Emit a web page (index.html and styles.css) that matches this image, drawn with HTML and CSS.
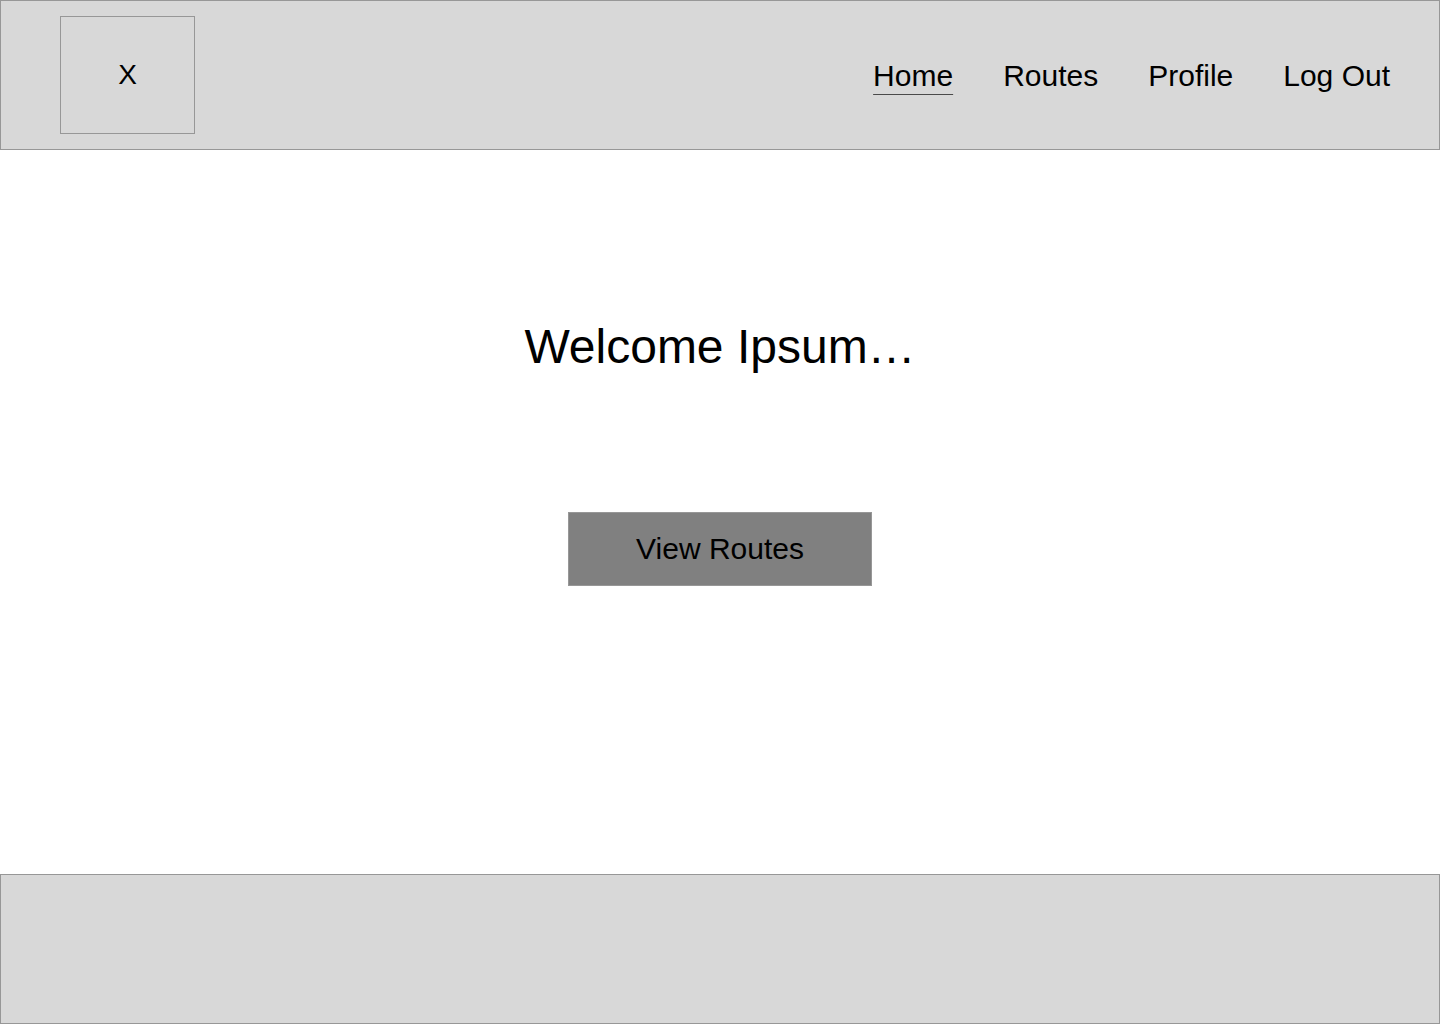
FILE: index.html
```html
<!DOCTYPE html>
<html lang="en">
<head>
<meta charset="utf-8">
<title>Welcome</title>
<link rel="stylesheet" href="styles.css">
</head>
<body>
<header class="site-header">
  <div class="logo">X</div>
  <nav class="nav">
    <a class="nav-link active" href="#">Home</a>
    <a class="nav-link" href="#">Routes</a>
    <a class="nav-link" href="#">Profile</a>
    <a class="nav-link" href="#">Log Out</a>
  </nav>
</header>
<main class="main">
  <h1 class="welcome">Welcome Ipsum…</h1>
  <a class="btn" href="#">View Routes</a>
</main>
<footer class="site-footer"></footer>
</body>
</html>
```

FILE: styles.css
```css
* { box-sizing: border-box; }
html, body { margin: 0; padding: 0; }
body {
  width: 1440px;
  height: 1024px;
  font-family: "Liberation Sans", Arial, Helvetica, sans-serif;
  color: #000;
  background: #fff;
  display: flex;
  flex-direction: column;
  overflow: hidden;
}
.site-header {
  height: 150px;
  background: #d8d8d8;
  border: 1px solid #979797;
  display: flex;
  align-items: center;
  justify-content: space-between;
  padding: 0 49px 0 59px;
}
.logo {
  width: 135px;
  height: 118px;
  border: 1px solid #979797;
  display: flex;
  align-items: center;
  justify-content: center;
  font-size: 28px;
}
.nav {
  display: flex;
  gap: 50px;
  align-items: center;
  padding-top: 2px;
}
.nav-link {
  font-size: 30px;
  color: #000;
  text-decoration: none;
  line-height: 34px;
}
.nav-link.active {
  text-decoration: underline;
  text-decoration-color: #4a4a4a;
  text-decoration-thickness: 1px;
  text-underline-offset: 8px;
}
.main {
  height: 724px;
  display: flex;
  flex-direction: column;
  align-items: center;
  padding-top: 169px;
}
.welcome {
  margin: 0;
  font-weight: normal;
  font-size: 48px;
  line-height: 56px;
}
.btn {
  margin-top: 137px;
  width: 304px;
  height: 74px;
  background: #808080;
  border: 1px solid #979797;
  display: flex;
  align-items: center;
  justify-content: center;
  font-size: 30px;
  color: #000;
  text-decoration: none;
}
.site-footer {
  height: 150px;
  background: #d8d8d8;
  border: 1px solid #979797;
}
```
